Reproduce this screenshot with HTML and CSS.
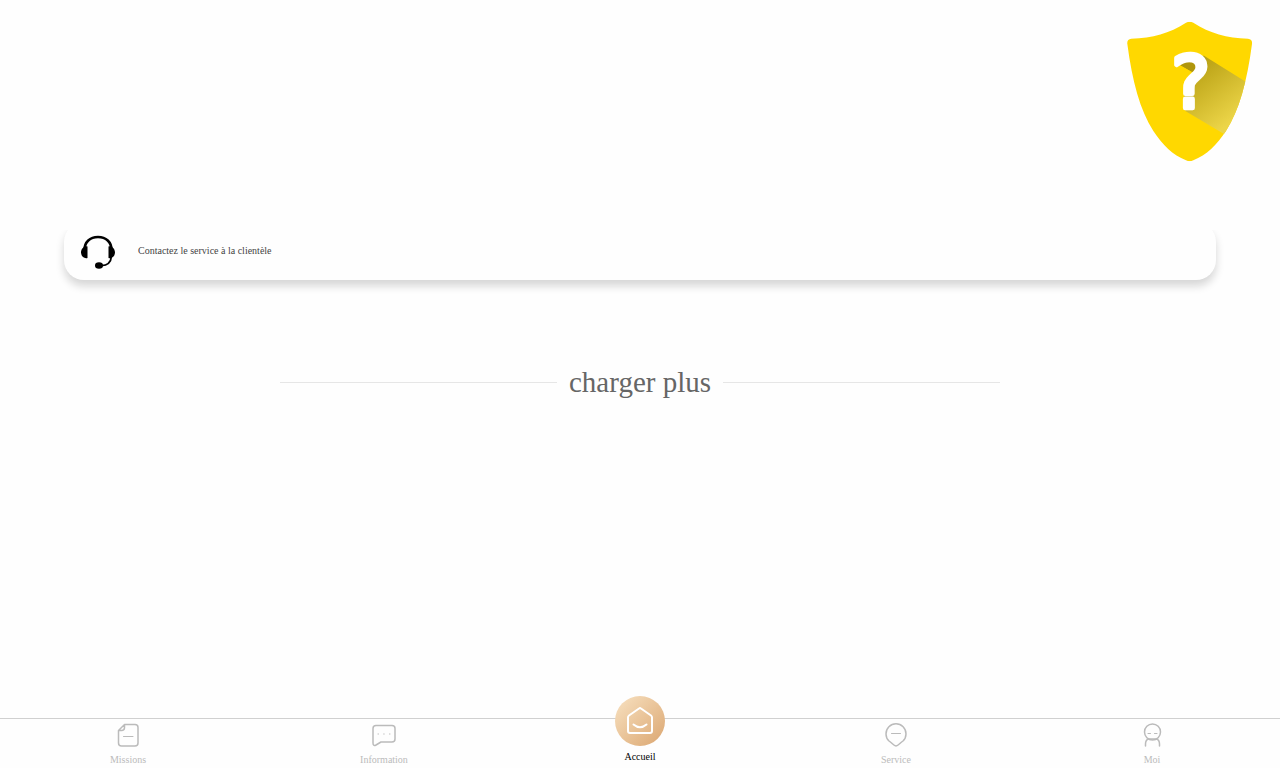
FILE: index.html
```
<!DOCTYPE html>
<html lang="fr">
<head>
    <meta charset="UTF-8">
    <meta name="viewport" content="width=device-width, initial-scale=1">
    <title>Service</title>
    <link rel="stylesheet" href="styles.css">
</head>
<body>

<header class="header">
    <svg class="shield" viewBox="0 0 480 480" role="img" aria-label="Aide">
        <defs>
            <linearGradient id="shade" gradientUnits="userSpaceOnUse" x1="240" y1="160" x2="370" y2="330">
                <stop offset="0" stop-color="#b59d10"/>
                <stop offset="1" stop-color="#ecd548"/>
            </linearGradient>
            <clipPath id="shield-clip">
                <path d="M228 38Q239 32 250 38C300 70 350 84 414 86Q428 88 426 102C411 215 388 300 348 363C320 405 290 435 250 451Q239 457 228 451C188 435 158 405 130 363C90 300 67 215 52 102Q50 88 64 86C128 84 178 70 228 38Z"/>
            </clipPath>
        </defs>
        <g clip-path="url(#shield-clip)">
            <rect width="480" height="480" fill="#ffd800"/>
            <path d="M282 137L440 236V430L226 303L222 255L256 190L202 160L215 140Z" fill="url(#shade)"/>
            <path d="M202 161L256 192L256 160L225 148Z" fill="#b0960c"/>
            <path d="M180 150L202 161L256 192L222 220V262L180 262Z" fill="#ffd800"/>
        </g>
        <text class="shield-mark" x="242" y="295" text-anchor="middle">?</text>
    </svg>
</header>

<main>
    <a class="contact" href="#">
        <svg class="contact-icon" viewBox="0 0 36 36" aria-hidden="true">
            <path d="M4.500 17C4.500 9 10 4 18 4S31.500 9 31.500 17" fill="none" stroke="#000" stroke-width="2.600"/>
            <path d="M31.500 23C31 29 28 33 20 32.500" fill="none" stroke="#000" stroke-width="1.800"/>
            <path d="M7.500 13.500V25C4 26 1 23 1 19.500S4 12.500 7.500 13.500ZM28.500 13.500V25C32 26 35 23 35 19.500S32 12.500 28.500 13.500Z"/>
            <ellipse cx="19" cy="32.500" rx="4" ry="3.200"/>
        </svg>
        <span>Contactez le service à la clientèle</span>
    </a>

    <div class="more">
        <span class="more-text">charger plus</span>
    </div>
</main>

<nav class="tabbar">
    <a class="tab" href="#">
        <svg class="tab-icon" viewBox="0 0 26 26" aria-hidden="true">
            <path d="M9.500 2.500H20Q23 2.500 23 5.500V21Q23 24 20 24H6.500Q3.500 24 3.500 21V8.500ZM9.500 2.500V5.500Q9.500 8.500 6.500 8.500H3.500"/>
            <path class="thin" d="M8.500 14.500H18"/>
        </svg>
        <span>Missions</span>
    </a>
    <a class="tab" href="#">
        <svg class="tab-icon" viewBox="0 0 26 26" aria-hidden="true">
            <path d="M5 3.500H21Q24 3.500 24 6.500V17Q24 20 21 20H10L5 23Q2 24.500 2 21V6.500Q2 3.500 5 3.500Z"/>
            <path class="thin" d="M7 12H7.500M12.700 12H13.200M18.500 12H19"/>
        </svg>
        <span>Information</span>
    </a>
    <a class="tab active" href="#">
        <span class="home">
            <svg class="home-icon" viewBox="0 0 30 30" aria-hidden="true">
                <path d="M14 2.500Q15 1.700 16 2.500L26 9.500Q27 10.200 27 11.500V25Q27 27 25 27H5Q3 27 3 25V11.500Q3 10.200 4 9.500Z"/>
                <path d="M8.500 18.500Q15 24 21.500 18.500"/>
            </svg>
        </span>
        <span>Accueil</span>
    </a>
    <a class="tab" href="#">
        <svg class="tab-icon" viewBox="0 0 26 26" aria-hidden="true">
            <path d="M13 24C11 24 9 21 6 19A10 10 0 1 1 20 19C17 21 15 24 13 24Z"/>
            <path class="thin" d="M8.500 11.500H17.500"/>
        </svg>
        <span>Service</span>
    </a>
    <a class="tab" href="#">
        <svg class="tab-icon" viewBox="0 0 26 26" aria-hidden="true">
            <circle cx="13.500" cy="10" r="8"/>
            <path d="M6.500 24V22Q6.500 18 9.500 17H17.500Q20.500 18 20.500 22V24"/>
            <path class="thin" d="M9 11.500H11.500M15.500 11.500H18"/>
        </svg>
        <span>Moi</span>
    </a>
</nav>

</body>
</html>
```
FILE: styles.css
```
* {
    box-sizing: border-box;
    margin: 0;
    padding: 0;
}

body {
    display: flex;
    flex-direction: column;
    min-height: 100vh;
    background-color: #fefefe;
    font-family: "Liberation Serif", "Times New Roman", serif;
    font-size: 10px;
    line-height: 12px;
}

a {
    color: inherit;
    text-decoration: none;
}

svg {
    display: block;
}

main {
    flex: 1;
}

.header {
    display: flex;
    justify-content: flex-end;
    padding: 10px;
}

.shield {
    width: 160px;
    height: 160px;
}

.shield-mark {
    font-family: "DejaVu Sans", sans-serif;
    font-weight: 400;
    font-size: 220px;
    fill: #fff;
    stroke: #fff;
    stroke-width: 14px;
    stroke-linejoin: round;
}

.contact {
    display: flex;
    align-items: center;
    gap: 22px;
    width: 90%;
    height: 58px;
    margin: 42px auto 0;
    padding: 0 16px;
    border-radius: 20px;
    background: #fefefe;
    box-shadow: 0 6px 8px #d6d6d6;
    clip-path: inset(8px -20px -20px);
    color: #444;
}

.contact-icon {
    width: 36px;
    height: 36px;
}

.more {
    display: flex;
    align-items: center;
    gap: 12px;
    margin: 85px 280px 0;
}

.more::before,
.more::after {
    content: "";
    flex: 1;
    height: 1px;
    background: #e6e6e6;
}

.more-text {
    font-size: 29px;
    line-height: 35px;
    color: #666;
}

.tabbar {
    position: sticky;
    bottom: 0;
    display: flex;
    height: 50px;
    border-top: 1px solid #d0d0d0;
    background: #fefefe;
}

.tab {
    flex: 1;
    display: flex;
    flex-direction: column;
    align-items: center;
    justify-content: flex-end;
    gap: 6px;
    padding-bottom: 2px;
    color: #bbb;
}

.tab-icon {
    width: 26px;
    height: 26px;
    fill: none;
    stroke: #bbb;
    stroke-width: 1.5;
    stroke-linecap: round;
    stroke-linejoin: round;
}

.tab-icon .thin {
    stroke-width: 1;
}

.active {
    gap: 5px;
    padding-bottom: 5px;
    color: #000;
}

.home {
    display: flex;
    align-items: center;
    justify-content: center;
    flex-shrink: 0;
    width: 50px;
    height: 50px;
    border-radius: 50%;
    background: linear-gradient(135deg, #f8e2c2, #dba670);
}

.home-icon {
    width: 30px;
    height: 30px;
    fill: none;
    stroke: #fff;
    stroke-width: 2;
    stroke-linecap: round;
    stroke-linejoin: round;
}
```
